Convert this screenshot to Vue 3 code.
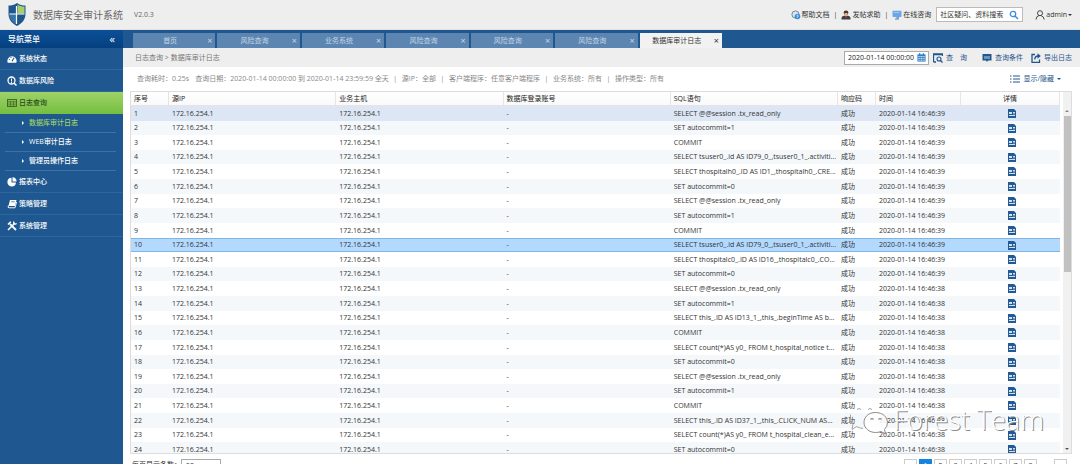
<script setup>
import { ref } from 'vue'

const menus = [
  { icon: 'gauge', label: '系统状态' },
  { icon: 'risk', label: '数据库风险' },
  { icon: 'log', label: '日志查询', open: true, children: ['数据库审计日志', 'WEB审计日志', '管理员操作日志'] },
  { icon: 'pie', label: '报表中心' },
  { icon: 'book', label: '策略管理' },
  { icon: 'tools', label: '系统管理' }
]
const tabs = ['首页', '风险查询', '业务系统', '风险查询', '风险查询', '风险查询', '数据库审计日志']
const statements = [
  'SELECT @@session .tx_read_only',
  'SET autocommit=1',
  'COMMIT',
  'SELECT tsuser0_.id AS ID79_0_,tsuser0_1_.activiti...',
  'SELECT thospitalh0_.ID AS ID1_,thospitalh0_.CRE...',
  'SET autocommit=0',
  'SELECT @@session .tx_read_only',
  'SET autocommit=1',
  'COMMIT',
  'SELECT tsuser0_.id AS ID79_0_,tsuser0_1_.activiti...',
  'SELECT thospitalc0_.ID AS ID16_,thospitalc0_.CO...',
  'SET autocommit=0',
  'SELECT @@session .tx_read_only',
  'SET autocommit=1',
  'SELECT this_.ID AS ID13_1_,this_.beginTime AS b...',
  'COMMIT',
  'SELECT count(*)AS y0_ FROM t_hospital_notice t...',
  'SET autocommit=0',
  'SELECT @@session .tx_read_only',
  'SET autocommit=1',
  'COMMIT',
  'SELECT this_.ID AS ID37_1_,this_.CLICK_NUM AS...',
  'SELECT count(*)AS y0_ FROM t_hospital_clean_e...',
  'SET autocommit=0'
]
const rows = statements.map((sql, i) => ({
  no: i + 1,
  sql,
  time: '2020-01-14 16:46:' + (i < 12 ? '39' : '38')
}))
const pages = ['«', '1', '2', '3', '4', '5', '6', '7', '8', '…', '»']
const selected = ref(10)
const from = ref('2020-01-14 00:00:00')
const keyword = ref('社区疑问、资料搜索')
</script>

<template>
  <div class="page">
    <header class="top">
      <svg class="logo" viewBox="0 0 18 23">
        <path d="M9 0C6.500 1.800 3.500 2.600 0.500 2.600V11C0.500 16.500 4 20.500 9 23C14 20.500 17.500 16.500 17.500 11V2.600C14.500 2.600 11.500 1.800 9 0Z" fill="#1f568d" />
        <path d="M9.500 1.500C11.500 2.900 13.800 3.500 16.500 3.600V10.500H9.500Z" fill="#a5cf6b" />
        <path d="M1 11.500H8.500V21.500C4.500 19.200 1.500 16 1 11.500Z" fill="#3a73a8" />
        <path d="M8.500 3V21M1.500 11H16.500" stroke="#fff" stroke-width="1.200" />
      </svg>
      <h1>数据库安全审计系统</h1>
      <span class="version">V2.0.3</span>
      <nav class="links">
        <a href="#help">
          <svg viewBox="0 0 10 10"><circle cx="4.500" cy="4.500" r="3.600" fill="#dbe5ee" stroke="#6d8aa8" /><circle cx="6.500" cy="6.500" r="2.800" fill="#3b8fd8" /><path d="M5.500 5.800q1-1.200 1.800 0q0 .6-.8 1v.8" stroke="#fff" fill="none" stroke-width=".8" /></svg>帮助文档
        </a>
        <i>|</i>
        <a href="#post">
          <svg viewBox="0 0 10 10"><circle cx="5" cy="2.800" r="2.400" fill="#4a3631" /><path d="M0.500 9.500V8q0-2 2.500-2.300h4Q9.500 6 9.500 8v1.500Z" fill="#3a3f48" /><path d="M3.500 3h3v2L5 6.500 3.500 5Z" fill="#e5ad86" /><path d="M4 6.300h2L5 8.500Z" fill="#d33" /></svg>发帖求助
        </a>
        <i>|</i>
        <a href="#chat">
          <svg viewBox="0 0 10 10"><rect x=".5" y=".8" width="9" height="6.200" rx=".8" fill="#6ba7e8" /><path d="M1.500 2.500h6" stroke="#9cc8f5" /><path d="M5 7v1.500L7 7M3 9h4" stroke="#4d86c9" fill="none" /></svg>在线咨询
        </a>
      </nav>
      <div class="search">
        <input v-model="keyword" aria-label="社区搜索" />
        <button aria-label="搜索">
          <svg viewBox="0 0 10 10"><circle cx="4" cy="4" r="2.700" fill="none" stroke="#3d8fdd" stroke-width="1.300" /><path d="M6 6l3 3" stroke="#3d8fdd" stroke-width="1.500" /></svg>
        </button>
      </div>
      <button class="user">
        <svg viewBox="0 0 10 10"><circle cx="5" cy="3.200" r="2.500" /><path d="M1 9.500q.3-3.500 3-4M6.200 5.700Q9 6.500 9.200 9.500" /></svg>admin<b class="caret"></b>
      </button>
    </header>

    <div class="body">
      <aside>
        <div class="side-head">导航菜单<button aria-label="收起菜单">«</button></div>
        <template v-for="m in menus" :key="m.label">
          <a href="#menu" class="item" :class="{ open: m.open }">
            <svg v-if="m.icon === 'gauge'" viewBox="0 0 10 10"><path d="M.8 8.800A4.600 4.600 0 1 1 9.200 8.800Z" fill="#fff" /><path d="M5 7.300L7 3.800" stroke="#1f568d" stroke-width="1.100" /><circle cx="2.500" cy="5.500" r=".6" fill="#1f568d" /><circle cx="4" cy="3.300" r=".6" fill="#1f568d" /></svg>
            <svg v-else-if="m.icon === 'risk'" viewBox="0 0 10 10" fill="none" stroke="#fff"><circle cx="4.500" cy="4.500" r="3.500" stroke-width="1.300" /><path d="M7 7l2.500 2.500" stroke-width="1.500" /><path d="M4.500 2.500v3M4.500 6v1" stroke-width="1" /></svg>
            <svg v-else-if="m.icon === 'log'" viewBox="0 0 10 10" fill="none" stroke="#3f6123" stroke-width=".9"><rect x=".5" y="1.500" width="9" height="7" /><path d="M.5 3.300h9M.5 5h9M.5 6.800h9M3.500 3v5.500M6.500 3v5.500" stroke-width=".6" /></svg>
            <svg v-else-if="m.icon === 'pie'" viewBox="0 0 10 10" fill="#fff"><path d="M4.500.8V5.500H9A4.300 4.300 0 1 1 4.500.8Z" /><path d="M5.500.3A4.300 4.300 0 0 1 9.600 4.500H5.500Z" /></svg>
            <svg v-else-if="m.icon === 'book'" viewBox="0 0 10 10"><path d="M3 1h6.500L8 7H1.500Z" fill="#fff" /><path d="M1.500 6.500Q.3 8.800 2 8.800H8L9.600 3" stroke="#fff" stroke-width=".9" fill="none" /><path d="M4.200 2.800h3.500" stroke="#1f568d" stroke-width=".7" /></svg>
            <svg v-else viewBox="0 0 10 10" fill="none" stroke="#fff"><path d="M3 3l6 6" stroke-width="1.800" /><path d="M1 3.500L3.800.8M8 2L1 9" stroke-width="1.500" /><path d="M7 .5q-1 2 .5 2.500t2-.8" stroke-width="1.200" /></svg>
            {{ m.label }}
          </a>
          <div v-if="m.children" class="subs">
            <a v-for="(c, i) in m.children" :key="c" href="#sub" :class="{ on: i === 0 }">{{ c }}</a>
          </div>
        </template>
      </aside>

      <main>
        <div class="strip">
          <div class="tabs">
            <div v-for="(t, i) in tabs" :key="i" class="tab" :class="{ active: i === 6 }">
              <a href="#tab">{{ t }}</a><button :aria-label="'关闭' + t">×</button>
            </div>
          </div>
        </div>

        <div class="crumbs">
          <span>日志查询 &gt; 数据库审计日志</span>
          <div class="tools">
            <label class="date">
              <input v-model="from" aria-label="开始时间" />
              <svg viewBox="0 0 10 10"><rect x=".5" y="1.500" width="9" height="8" fill="#2f7fc6" /><path d="M3 0v3M7 0v3" stroke="#2f7fc6" stroke-width="1.200" /><path d="M1.500 4h7M1.500 6h7M1.500 8h7" stroke="#fff" stroke-width=".9" /><path d="M3.500 3.500v5.500M6.500 3.500v5.500" stroke="#2f7fc6" stroke-width=".8" /></svg>
            </label>
            <button class="query">
              <svg viewBox="0 0 10 10" fill="none" stroke="#1f568d"><path d="M.5 9V1h9v2M.5 1.500h9M.5 9H3" stroke-width="1.300" /><circle cx="6" cy="6" r="2" stroke-width="1.100" /><path d="M7.500 7.500l2 2" stroke-width="1.200" /></svg>查&emsp;询
            </button>
            <button class="cond">
              <svg viewBox="0 0 10 10"><path d="M.5 1h9v6.500h-3.500L5 9 4 7.500H.5Z" fill="#1f568d" /><path d="M3 3v3M5 3v3M7 3v3" stroke="#eee" stroke-width=".8" /></svg>查询条件
            </button>
            <button class="export">
              <svg viewBox="0 0 10 10" fill="none" stroke="#1f568d" stroke-width="1.300"><path d="M4 1.500H1V9.300H8.500V6.500" /><path d="M3.800 6.500Q4 3 7 3" /><path d="M6.500.3L9.800 3 6.500 5.700Z" fill="#1f568d" stroke="none" /></svg>导出日志
            </button>
          </div>
        </div>

        <div class="info">
          <span class="cost">查询耗时：0.25s</span>
          <span>查询日期：2020-01-14 00:00:00 到 2020-01-14 23:59:59 全天</span><i>|</i>
          <span>源IP：全部</span><i>|</i>
          <span>客户端程序：任意客户端程序</span><i>|</i>
          <span>业务系统：所有</span><i>|</i>
          <span>操作类型：所有</span>
          <button class="toggle">
            <svg viewBox="0 0 10 10" stroke="#1f568d"><path d="M0 2h1.500M0 5h1.500M0 8h1.500M3 2h7M3 5h7M3 8h7" /></svg>显示/隐藏<b class="caret"></b>
          </button>
        </div>

        <div class="grid">
          <table>
            <colgroup><col class="c-no" /><col /><col /><col /><col /><col class="c-code" /><col class="c-time" /><col class="c-detail" /></colgroup>
            <thead>
              <tr><th>序号</th><th>源IP</th><th>业务主机</th><th>数据库登录账号</th><th>SQL语句</th><th>响应码</th><th>时间</th><th>详情</th></tr>
            </thead>
            <tbody>
              <tr v-for="r in rows" :key="r.no" :class="{ hover: r.no === 1, selected: r.no === selected }" @click="selected = r.no">
                <td>{{ r.no }}</td><td>172.16.254.1</td><td>172.16.254.1</td><td>-</td>
                <td>{{ r.sql }}</td><td>成功</td><td>{{ r.time }}</td>
                <td>
                  <button aria-label="查看详情"><svg viewBox="0 0 8 9"><path d="M0 0h6l2 2V9H0Z" fill="#235a93" /><path d="M1 3h3v2H1ZM5 3h2v1H5ZM5 4.500h2v.8H5ZM1 6h6v1H1Z" fill="#cfe0f0" /></svg></button>
                </td>
              </tr>
            </tbody>
          </table>
          <div class="rail"><b class="up"></b><b class="thumb"></b><b class="down"></b></div>
        </div>

        <footer>
          <label>每页显示条数：<input value="50" /></label>
          <nav class="pager">
            <button v-for="p in pages" :key="p" :class="{ on: p === '1', gap: p === '…' }">{{ p }}</button>
          </nav>
        </footer>
      </main>
    </div>

    <div class="mark">
      <svg viewBox="0 0 40 32" fill="none" stroke="#8c8c8c">
        <path d="M14 24.500Q10 24 7.500 22.500L3 25.500L4 20Q0 16 1.500 10.500M8 5.500q2-2 4 0M19 5.500q2-2 4 0" stroke-width=".8" />
        <path d="M26.500 8.500C19.500 8.500 15 13 15 18.500S20 28.500 26.500 28.500Q29.500 28.500 32 27.500L36.500 30L35.500 25.500Q38.500 22.500 38.500 18.500C38.500 13 33.500 8.500 26.500 8.500Z" fill="#fff" fill-opacity=".85" />
        <path d="M21.500 15.500q1.500-1.800 3 0M29.500 15.500q1.500-1.800 3 0" stroke-width="1.200" />
      </svg>
      <span>Forest Team</span>
    </div>
  </div>
</template>

<style>
body { margin: 0; overflow: hidden; }
</style>

<style scoped>
.page { position: relative; height: 100vh; display: flex; flex-direction: column; overflow: hidden; background: #fff; color: #333; font: 7px/10px "Open Sans", "Noto Sans CJK SC", sans-serif; }
* { box-sizing: border-box; }
button, input { font: inherit; color: inherit; border: 0; background: none; padding: 0; margin: 0; outline: 0; min-width: 0; }
a { color: inherit; text-decoration: none; }
i { font-style: normal; }
svg { display: block; flex: none; width: 10px; height: 10px; }
.caret { display: inline-block; border: 2px solid transparent; border-top-color: currentColor; border-bottom: 0; }

.top { flex: none; display: flex; align-items: center; height: 30px; padding: 0 8px; background: #eee; border-bottom: 1px solid #e6e0de; }
.logo { width: 18px; height: 23px; }
h1 { margin: 0 11px 0 7px; font-size: 10px; line-height: 16px; font-weight: 400; color: #666; }
.version { color: #666; }
.links { display: flex; align-items: center; gap: 4px; margin-left: auto; }
.links a { display: flex; align-items: center; gap: 1px; }
.search { display: flex; align-items: center; width: 87px; height: 15px; margin: 0 12px 0 5px; padding: 0 3px; border: 1px solid #bbb; background: #fff; }
.search input { flex: 1; }
.user { display: flex; align-items: center; gap: 1px; }
.user svg { fill: none; stroke: #444; stroke-width: 1; }

.body { flex: 1; min-height: 0; display: flex; }
aside { flex: none; width: 123px; background: #1f5890; color: #fff; font-weight: 500; }
.side-head { display: flex; justify-content: space-between; height: 18px; padding: 0 8px; background: linear-gradient(#0c4f97, #05407f); font-size: 8px; line-height: 18px; font-weight: 500; }
.side-head button { font-size: 11px; line-height: 16px; }
.item { display: flex; align-items: center; gap: 2px; height: 22px; padding-left: 7px; border-bottom: 1px solid #2d679d; }
.item.open { background: linear-gradient(#9fd268, #76bf42); border-bottom-color: #76bf42; color: #2c4a1a; }
.subs { padding: 0 7px 0 5px; }
.subs a { display: flex; align-items: center; gap: 5px; height: 19px; padding-left: 17px; border-bottom: 1px solid #3c72a5; }
.subs a::before { content: ""; border: 2px solid transparent; border-left: 2px solid #fff; border-right: 0; }
.subs .on { color: #9fd268; }

main { flex: 1; min-width: 0; display: flex; flex-direction: column; }
.strip { flex: none; display: flex; align-items: flex-end; height: 18px; padding-left: 10px; background: #1f5890; }
.tabs { display: flex; gap: 2px; width: 589px; height: 15px; }
.tab { flex: 1; display: flex; align-items: center; padding-right: 3px; background: #5c86b1; color: #c6d6e6; text-align: center; }
.tab a { flex: 1; }
.tab button { font-size: 9px; }
.tab.active { background: #f2f2f2; color: #333; }
.crumbs { flex: none; display: flex; align-items: center; justify-content: space-between; height: 19px; padding: 0 8px 0 12px; background: #eee; color: #777; }
.tools { display: flex; align-items: center; color: #1f568d; }
.tools button { display: flex; align-items: center; gap: 3px; }
.date { display: flex; align-items: center; width: 85px; height: 14px; padding: 0 2px 0 3px; border: 1px solid #aaa; background: #fff; color: #222; }
.date input { flex: 1; }
.date svg { width: 9px; height: 9px; }
.query { margin: 0 15px 0 4px; }
.cond { margin-right: 8px; }
.info { flex: none; display: flex; align-items: center; height: 24px; padding: 0 19px 0 14px; color: #888; white-space: nowrap; }
.cost { margin-right: 6px; }
.info i { width: 13px; text-align: center; }
.toggle { display: flex; align-items: center; gap: 3px; margin-left: auto; color: #1f568d; }

.grid { flex: 1; min-height: 0; display: flex; margin: 0 8px 0 7px; border: 1px solid #ddd; overflow: hidden; }
table { flex: 1; width: 0; align-self: flex-start; table-layout: fixed; border-collapse: separate; border-spacing: 0; }
.c-no, .c-code { width: 38px; }
.c-time { width: 85px; }
.c-detail { width: 99px; }
th { height: 14px; padding: 0 3px; border-right: 1px solid #e5e5e5; border-bottom: 1px solid #e5e5e5; background: linear-gradient(#fff, #f9f9f9); text-align: left; font-weight: 400; color: #222; }
td { height: 15px; padding: 0 0 0 3px; line-height: 12px; white-space: nowrap; }
th, td { vertical-align: middle; }
tr:nth-child(8n + 2) td, tr:nth-child(8n + 4) td, tr:nth-child(8n + 7) td { height: 14px; }
th:last-child, td:last-child { text-align: center; }
tr:nth-child(even) td { background: #f5f8fb; }
tr.hover td { background: #dce6f4; }
tr.selected td { background: #b3d9ff; border-top: 1px solid #7fb6e6; border-bottom: 1px solid #7fb6e6; line-height: 10px; }
td button { display: block; margin: 0 auto; }
td svg { width: 8px; height: 9px; }
.rail { flex: none; width: 11px; display: flex; flex-direction: column; align-items: center; padding: 18px 0 3px; background: linear-gradient(90deg, #fff 3px, #f1f1f1 3px); }
.up { border: 2px solid transparent; border-bottom-color: #888; border-top: 0; margin-left: 3px; }
.thumb { width: 7px; height: 156px; margin: 4px 0 auto 3px; background: #c1c1c1; }
.down { border: 2px solid transparent; border-top-color: #555; border-bottom: 0; margin-left: 3px; }

footer { flex: none; display: flex; justify-content: space-between; height: 10px; padding: 5px 13px 0 9px; overflow: hidden; }
footer label { display: flex; height: 12px; align-items: center; }
footer input { width: 40px; height: 12px; padding-left: 4px; border: 1px solid #aaa; }
.pager { display: flex; gap: 2px; }
.pager button { width: 13px; height: 13px; border: 1px solid #ccc; line-height: 11px; }
.pager .on { background: #1583e0; border-color: #1583e0; color: #fff; }
.pager .gap { border-color: transparent; }

.mark { position: absolute; right: 36px; bottom: 28px; display: flex; align-items: center; gap: 4px; pointer-events: none; }
.mark svg { width: 40px; height: 32px; }
.mark span { font: 300 27px/32px "Open Sans", sans-serif; color: #fff; text-shadow: 1px 1px 0 #888; }
</style>
